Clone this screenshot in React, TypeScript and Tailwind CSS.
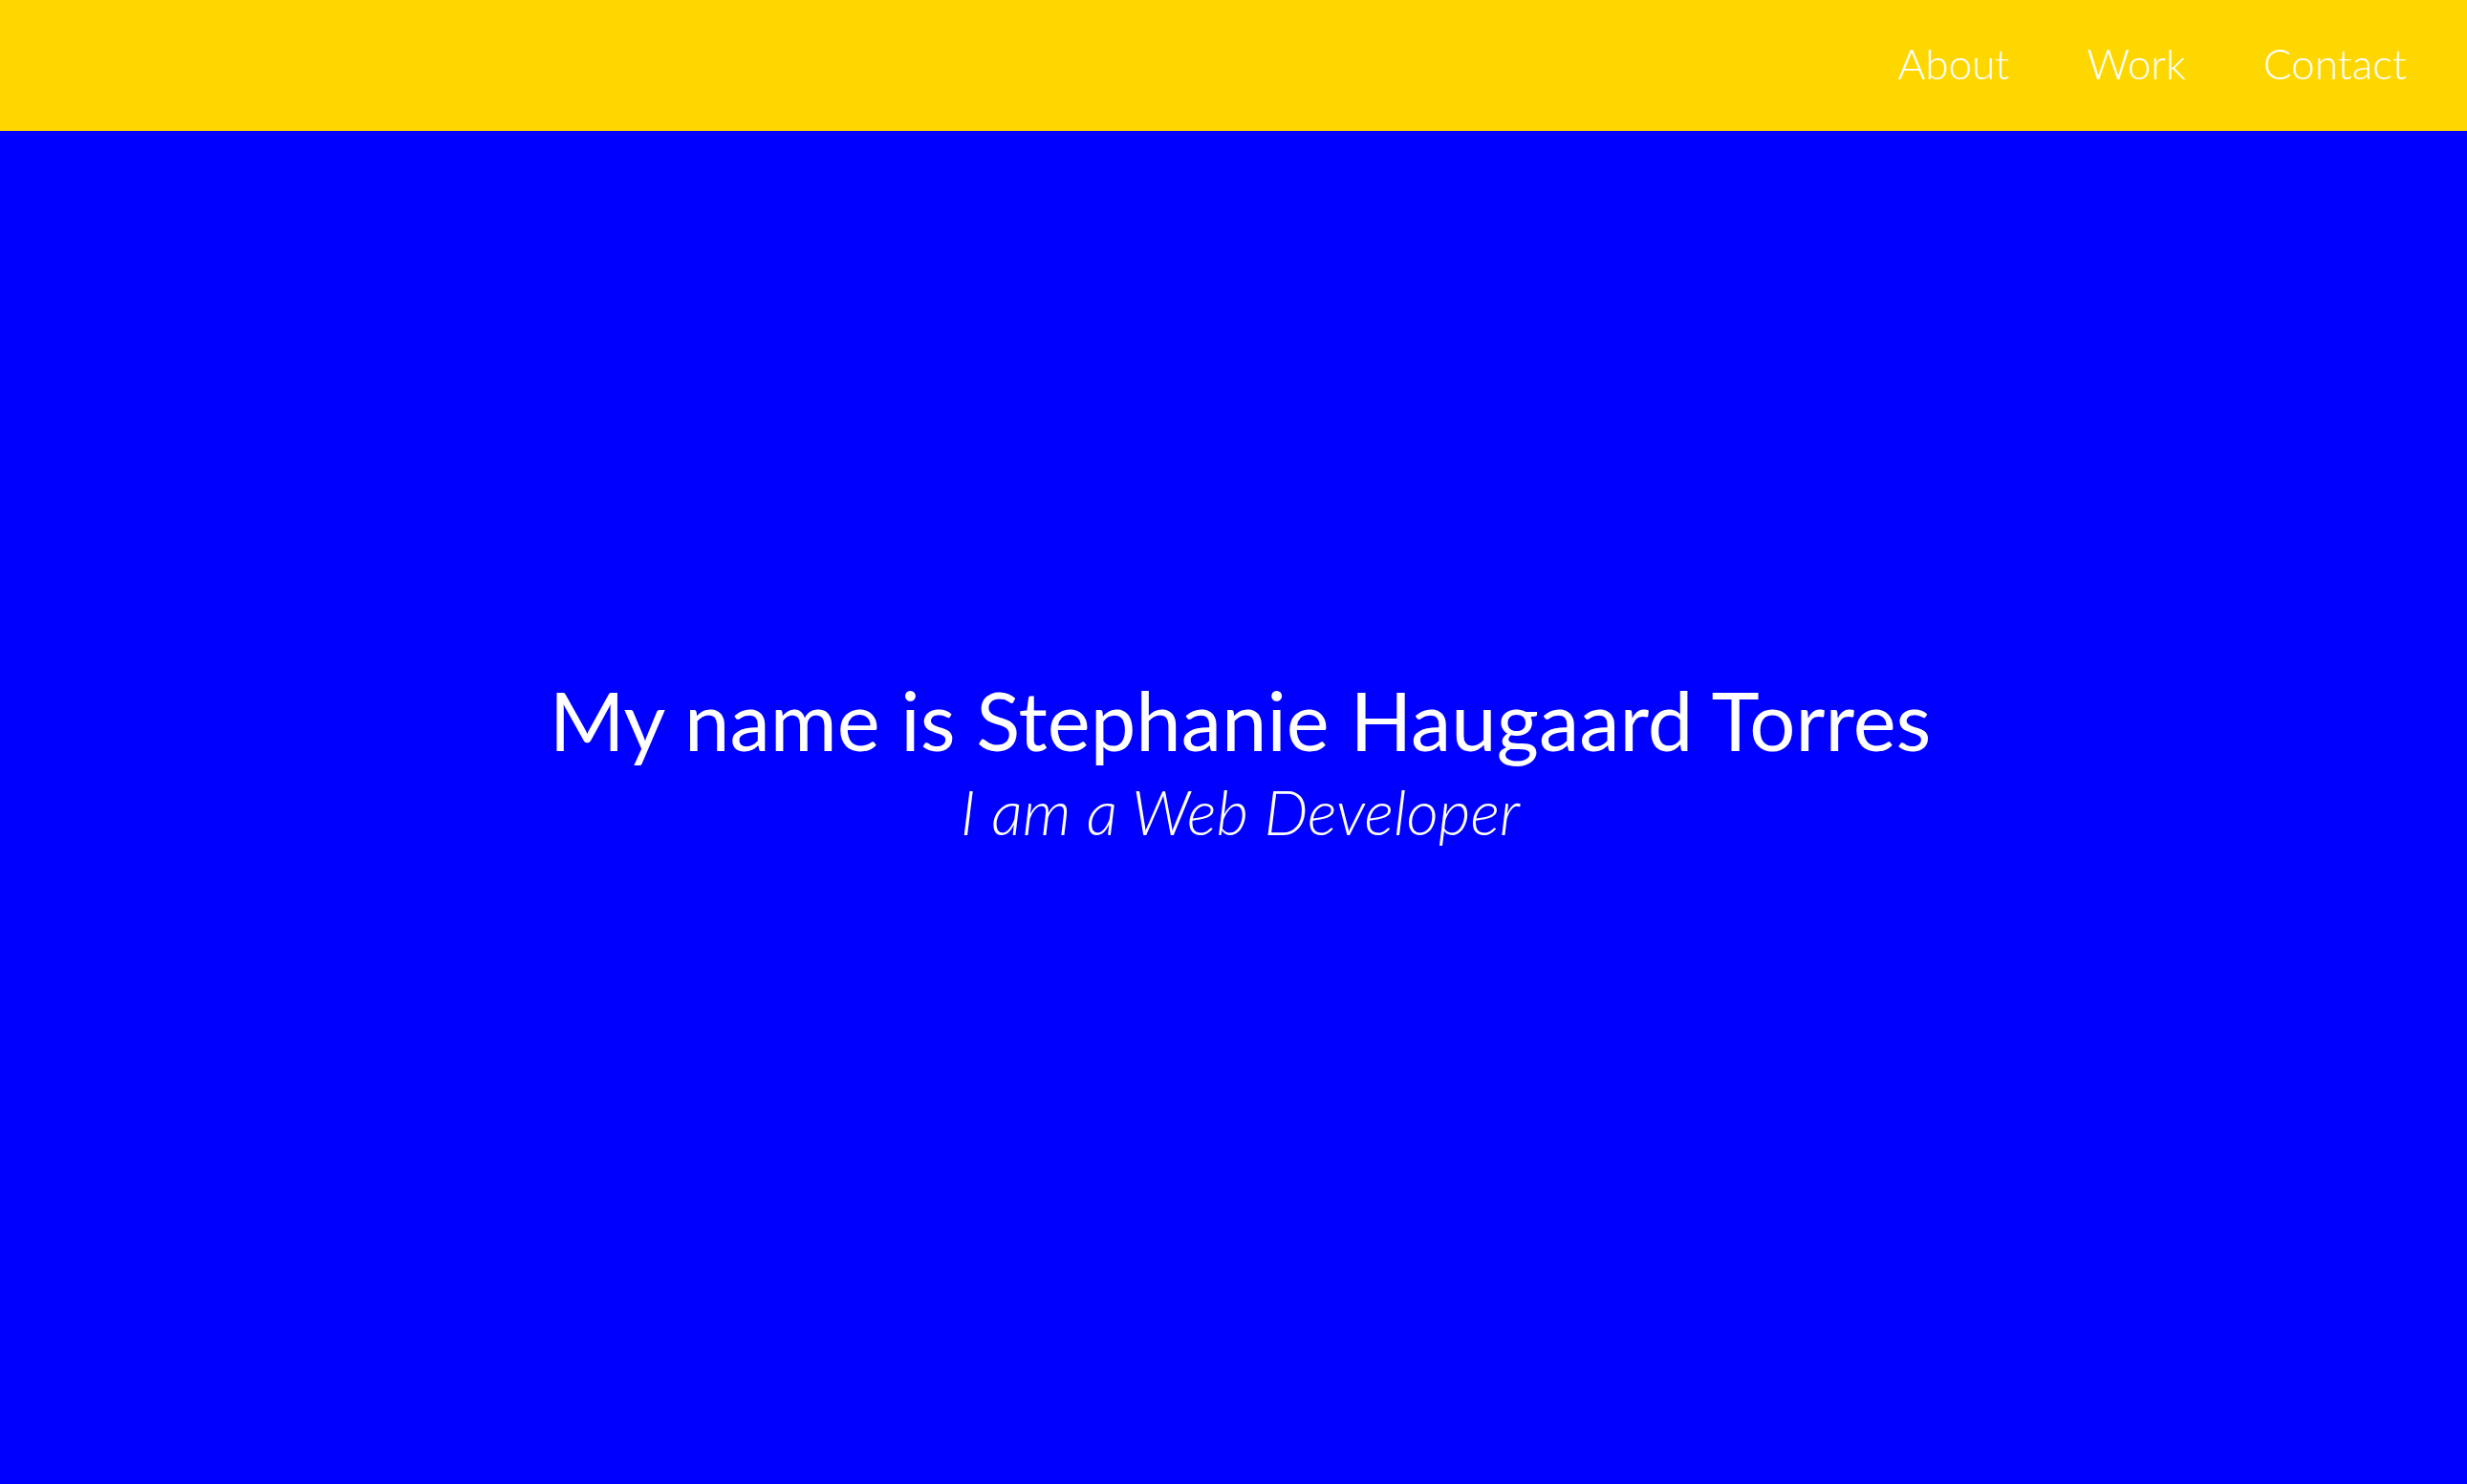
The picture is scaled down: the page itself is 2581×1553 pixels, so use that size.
export default function App() {
  return (
    <div className="flex min-h-screen flex-col bg-[#0000ff] font-['Lato',sans-serif] text-white">
      <header className="flex h-[137px] items-center justify-end bg-[#ffd700] pr-[63px]">
        <nav className="flex items-center gap-[81px] pb-[6px] text-[44px] font-light">
          <a href="#about">About</a>
          <a href="#work">Work</a>
          <a href="#contact">Contact</a>
        </nav>
      </header>

      <main className="flex flex-1 flex-col items-center justify-center pb-[98px] pl-[14px]">
        <h1 className="text-[85px] leading-none font-normal">
          My name is Stephanie Haugaard Torres
        </h1>
        <p className="mt-[21px] text-[65px] leading-none font-light italic">
          I am a Web Developer
        </p>
      </main>
    </div>
  );
}
